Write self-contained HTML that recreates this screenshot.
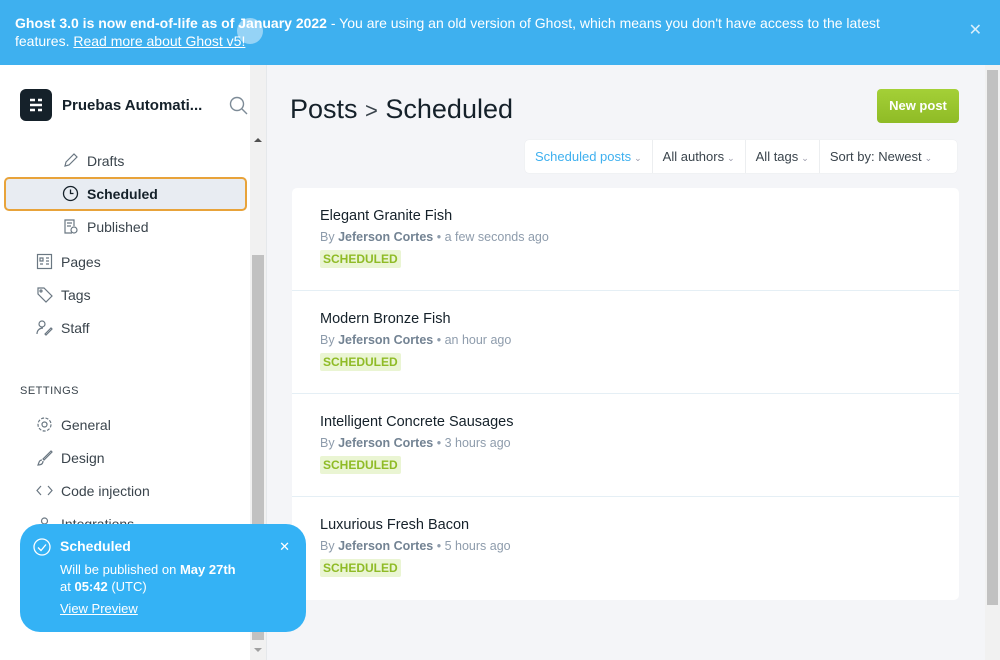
<!DOCTYPE html>
<html><head><meta charset="utf-8"><style>
*{box-sizing:border-box;margin:0;padding:0}
body{width:1000px;height:660px;overflow:hidden;font-family:"Liberation Sans",sans-serif;background:#f4f5f8;position:relative;color:#15212a}
.banner{position:absolute;left:0;top:0;width:1000px;height:65px;background:#3eb0ef;color:#fff;font-size:14px;line-height:18px;padding:14px 70px 14px 15px}
.banner a{color:#fff;text-decoration:underline}
.side{position:absolute;left:0;top:65px;width:267px;height:595px;background:#fff;border-right:1px solid #e5e8eb}
.logo{position:absolute;left:20px;top:24px;width:32px;height:32px;background:#15212a;border-radius:6px}
.title{position:absolute;left:62px;top:32px;font-size:15px;font-weight:bold;color:#15212a}
.nav{position:absolute;font-size:14px;color:#3a444c;display:flex;align-items:center;gap:8px}
.nav svg{width:17px;height:17px}
.sb{position:absolute;left:250px;top:65px;width:16px;height:595px;background:#f1f1f1}
.sbt{position:absolute;left:252px;top:255px;width:12px;height:385px;background:#c1c1c1}
.main h1{position:absolute;left:290px;top:94px;font-size:27px;font-weight:normal;color:#15212a}
.btn{position:absolute;left:877px;top:89px;width:82px;height:34px;background:linear-gradient(#a4d037,#8fbb26);border-radius:4px;color:#fff;font-weight:bold;font-size:13px;text-align:center;line-height:34px}
.filters{position:absolute;left:525px;top:140px;width:432px;height:33px;background:#fff;border-radius:4px;display:flex;font-size:13px;color:#3a444c;box-shadow:0 0 1px rgba(0,0,0,.1)}
.filters div{padding:0 10px;line-height:33px;border-right:1px solid #eceef0;white-space:nowrap}
.filters div:last-child{border:none}
.filters i{font-style:normal;font-size:9px;color:#99a;margin-left:3px}
.card{position:absolute;left:292px;top:188px;width:667px;height:412px;background:#fff;border-radius:5px}
.post{height:103px;border-bottom:1px solid #e5eff5;padding:20px 28px}
.post:last-child{border:none}
.pt{font-size:14.5px;color:#15212a}
.pm{font-size:12.5px;color:#8e9cac;margin-top:6px}
.pm b{color:#738393}
.tag{display:inline-block;margin-top:6px;background:#eaf5d3;color:#8fbb26;font-size:12px;font-weight:bold;padding:2px 3px;border-radius:2px}
.psb{position:absolute;left:985px;top:65px;width:15px;height:595px;background:#f1f1f1}
.psbt{position:absolute;left:987px;top:70px;width:11px;height:535px;background:#c1c1c1}
.toast{position:absolute;left:20px;top:524px;width:286px;height:108px;background:#34b2f5;border-radius:20px;color:#fff;font-size:13px;padding:14px 0 0 40px;line-height:17px}
</style></head><body>
<div class="banner"><b>Ghost 3.0 is now end-of-life as of January 2022</b> - You are using an old version of Ghost, which means you don't have access to the latest features. <a>Read more about Ghost v5!</a>
<span style="position:absolute;right:18px;top:22px;font-size:16px;color:#d8eefb">✕</span>
<span style="position:absolute;left:237px;top:18px;width:26px;height:26px;border-radius:50%;background:rgba(255,255,255,.45)"></span></div>
<div class="side">
<div class="logo"><svg width="32" height="32" viewBox="0 0 32 32" stroke="#fff" stroke-width="2.4"><path d="M10 11h5M18 11h4M10 16h12M10 21h5M18 21h4"/></svg></div>
<div class="title">Pruebas Automati...</div>
<svg style="position:absolute;left:229px;top:31px" width="19" height="19" viewBox="0 0 19 19" fill="none" stroke="#7d8b97" stroke-width="1.4"><circle cx="8" cy="8" r="6.5"/><path d="M13 13l5 5"/></svg>
<div class="nav" style="left:62px;top:87px"><svg viewBox="0 0 17 17" fill="none" stroke="#6a7782" stroke-width="1.2"><path d="M3 14l1-4 8-8 3 3-8 8z"/></svg>Drafts</div>
<div style="position:absolute;left:4px;top:112px;width:243px;height:34px;border:2px solid #e8a33a;border-radius:5px;background:#e8ecf2"></div>
<div class="nav" style="left:62px;top:120px;font-weight:bold;color:#15212a"><svg viewBox="0 0 17 17" fill="none" stroke="#15212a" stroke-width="1.3"><circle cx="8.5" cy="8.5" r="7"/><path d="M8.5 4.5v4h3"/></svg>Scheduled</div>
<div class="nav" style="left:62px;top:153px"><svg viewBox="0 0 17 17" fill="none" stroke="#6a7782" stroke-width="1.2"><path d="M10 15H3V2h9v6M5 5h5M5 8h4"/><circle cx="12" cy="12" r="3"/></svg>Published</div>
<div class="nav" style="left:36px;top:188px"><svg viewBox="0 0 17 17" fill="none" stroke="#6a7782" stroke-width="1.2"><rect x="1.5" y="1.5" width="14" height="14"/><path d="M4 5h3v3H4zM4 11h3M10 5h3M10 8h3M10 11h3"/></svg>Pages</div>
<div class="nav" style="left:36px;top:221px"><svg viewBox="0 0 17 17" fill="none" stroke="#6a7782" stroke-width="1.2"><path d="M2 2h6l8 8-6 6-8-8z"/><circle cx="5" cy="5" r="1"/></svg>Tags</div>
<div class="nav" style="left:36px;top:254px"><svg viewBox="0 0 17 17" fill="none" stroke="#6a7782" stroke-width="1.2"><circle cx="6" cy="5" r="3"/><path d="M1 15c0-4 3-6 6-6M9 15l6-6 1 1-6 6z"/></svg>Staff</div>
<div style="position:absolute;left:20px;top:320px;font-size:11px;color:#3a444c;letter-spacing:.5px">SETTINGS</div>
<div class="nav" style="left:36px;top:351px"><svg viewBox="0 0 17 17" fill="none" stroke="#6a7782" stroke-width="1.2"><circle cx="8.5" cy="8.5" r="2.5"/><circle cx="8.5" cy="8.5" r="6.5" stroke-dasharray="3 1.5"/></svg>General</div>
<div class="nav" style="left:36px;top:384px"><svg viewBox="0 0 17 17" fill="none" stroke="#6a7782" stroke-width="1.2"><path d="M15 2L7 10l1 1 8-8zM6 11c-3 0-3 3-4 5 3 0 5-1 5-4"/></svg>Design</div>
<div class="nav" style="left:36px;top:417px"><svg viewBox="0 0 17 17" fill="none" stroke="#6a7782" stroke-width="1.2"><path d="M5 4L1 8.5 5 13M12 4l4 4.5-4 4.5"/></svg>Code injection</div>
<div class="nav" style="left:36px;top:450px"><svg viewBox="0 0 17 17" fill="none" stroke="#6a7782" stroke-width="1.2"><circle cx="8.5" cy="6" r="3"/></svg>Integrations</div>
</div>
<div class="sb"></div><div class="sbt"></div>
<div style="position:absolute;left:254px;top:138px;border:4px solid transparent;border-bottom:4px solid #505050;border-top:0"></div>
<div style="position:absolute;left:254px;top:648px;border:4px solid transparent;border-top:4px solid #a0a0a0;border-bottom:0"></div>
<div class="main"><h1>Posts <span style="color:#3a444c;font-size:22px">&gt;</span> Scheduled</h1></div>
<div class="btn">New post</div>
<div class="filters"><div style="color:#3eb0ef">Scheduled posts<i>⌄</i></div><div>All authors<i>⌄</i></div><div>All tags<i>⌄</i></div><div style="flex:1">Sort by: Newest<i>⌄</i></div></div>
<div class="card">
<div class="post"><div class="pt">Elegant Granite Fish</div><div class="pm">By <b>Jeferson Cortes</b> • a few seconds ago</div><div class="tag">SCHEDULED</div></div>
<div class="post"><div class="pt">Modern Bronze Fish</div><div class="pm">By <b>Jeferson Cortes</b> • an hour ago</div><div class="tag">SCHEDULED</div></div>
<div class="post"><div class="pt">Intelligent Concrete Sausages</div><div class="pm">By <b>Jeferson Cortes</b> • 3 hours ago</div><div class="tag">SCHEDULED</div></div>
<div class="post"><div class="pt">Luxurious Fresh Bacon</div><div class="pm">By <b>Jeferson Cortes</b> • 5 hours ago</div><div class="tag">SCHEDULED</div></div>
</div>
<div class="psb"></div><div class="psbt"></div>
<div class="toast">
<svg style="position:absolute;left:13px;top:14px" width="18" height="18" viewBox="0 0 18 18" fill="none" stroke="#fff" stroke-width="1.3"><circle cx="9" cy="9" r="8"/><path d="M5 9.5l3 3 5-6"/></svg>
<div style="font-weight:bold;font-size:14px">Scheduled</div>
<div style="margin-top:6px">Will be published on <b>May 27th</b><br>at <b>05:42</b> (UTC)</div>
<div style="margin-top:5px;text-decoration:underline">View Preview</div>
<span style="position:absolute;right:16px;top:14px;font-size:13px">✕</span>
</div>
</body></html>
